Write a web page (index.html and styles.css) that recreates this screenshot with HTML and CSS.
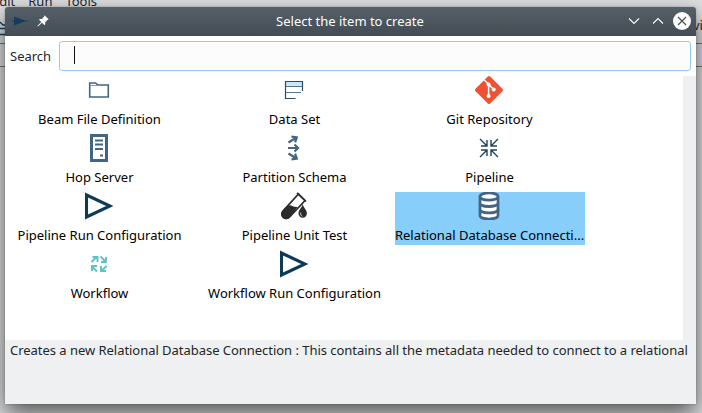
FILE: index.html
```html
<!DOCTYPE html>
<html lang="en">
<head>
<meta charset="utf-8">
<title>Select the item to create</title>
<link rel="stylesheet" href="styles.css">
</head>
<body>
<div class="backdrop">
  <div class="menubar"><span>Edit</span><span>Run</span><span>Tools</span></div>
  <div class="toolbar">
    <svg class="tool-icon" width="8" height="20" viewBox="0 0 8 20"><path d="M0 5l3 3h5M0 11.500h8M0 17.500h8" fill="none" stroke="#16405e" stroke-width="1.300"/></svg>
    <span class="tool-label">vi</span>
  </div>
  <div class="tabs"></div>
</div>
<div class="dialog">
  <header class="titlebar">
    <svg class="app-icon" width="18" height="12" viewBox="0 0 18 12"><path d="M0 6h18" stroke="#274d6b" stroke-width="1"/><path d="M3 1.500L15 6 3 10.500z" fill="#123c60"/></svg>
    <svg class="pin" width="12" height="12" viewBox="0 0 12 12"><path d="M7.500 0.300L11.700 4.300 10.600 4.800 8.200 7.300 8.200 9.500 7.300 10 4.900 7.700 1 11.600 0.300 11 4.300 7 2.100 4.800 2.600 4 4.900 3.900 7.200 1.600z" fill="#fcfcfc"/></svg>
    <h1 class="title">Select the item to create</h1>
    <div class="controls">
      <svg width="12" height="8" viewBox="0 0 12 8"><path d="M1 1.500l5 5 5-5" fill="none" stroke="#fcfcfc" stroke-width="1.100"/></svg>
      <svg width="12" height="8" viewBox="0 0 12 8"><path d="M1 6.500l5-5 5 5" fill="none" stroke="#fcfcfc" stroke-width="1.100"/></svg>
      <svg width="18" height="18" viewBox="0 0 18 18"><circle cx="9" cy="9" r="9" fill="#fcfcfc"/><path d="M5 5l8 8M13 5l-8 8" stroke="#475057" stroke-width="1.100"/></svg>
    </div>
  </header>
  <div class="search"><span class="search-label">Search</span><div class="field"><span class="caret"></span></div></div>
  <main class="list">
    <div class="grid">
      <div class="item"><svg class="icon" viewBox="0 0 28 28"><path d="M4.700 21V7h6l2 2h10.600v12z" fill="none" stroke="#416583" stroke-width="1.600"/><path d="M5 9.500h9" stroke="#8499a9" stroke-width="1"/></svg><span class="label">Beam File Definition</span></div>
      <div class="item"><svg class="icon" viewBox="0 0 28 28"><path d="M6 6h16v5H6z" fill="#c9e7fa"/><path d="M15.500 22.500h-10v-17h17V15" fill="none" stroke="#254e6c" stroke-width="1.200"/><path d="M6 10.500h16M6 16.500h15" stroke="#58758b" stroke-width="1"/></svg><span class="label">Data Set</span></div>
      <div class="item"><svg class="icon" viewBox="0 0 28 28"><path d="M12.800.6a1.700 1.700 0 0 1 2.400 0L27.400 12.800a1.700 1.700 0 0 1 0 2.400L15.200 27.400a1.700 1.700 0 0 1-2.400 0L.6 15.200a1.700 1.700 0 0 1 0-2.400z" fill="#f05133"/><path d="M9.300 3.900l4.300 4.400V20M13.700 8.500l5 5" fill="none" stroke="#fff" stroke-width="1.500"/><circle cx="13.600" cy="8.400" r="2" fill="#fff"/><circle cx="18.700" cy="13.600" r="2" fill="#fff"/><circle cx="13.600" cy="20" r="2" fill="#fff"/></svg><span class="label">Git Repository</span></div>
      <div class="item"><svg class="icon" viewBox="0 0 28 28"><path d="M6.500 1.500h15v25h-15z" fill="#fff" stroke="#416583" stroke-width="3"/><path d="M10 6.500h8M10 10.500h8M10 15h8M15 21.500h3" stroke="#416583" stroke-width="1.900"/></svg><span class="label">Hop Server</span></div>
      <div class="item"><svg class="icon" viewBox="0 0 28 28"><path d="M8.500 8.500l8-5M11.500 2.700l5.300.7-1.700 5M8 14h10M14.500 10.500L18 14l-3.500 3.500M8.500 19.500l8 5M15.100 19.600l1.700 5-5.300.7" fill="none" stroke="#416583" stroke-width="2.200"/></svg><span class="label">Partition Schema</span></div>
      <div class="item"><svg class="icon" viewBox="0 0 28 28"><path d="M5 5l6.500 6.500M6 12h6V6M23 5l-6.500 6.500M16 6v6h6M5 23l6.500-6.500M6 16h6v6M23 23l-6.500-6.500M22 16h-6v6" fill="none" stroke="#1b4562" stroke-width="1.400"/></svg><span class="label">Pipeline</span></div>
      <div class="item"><svg class="icon" viewBox="0 0 28 28"><path d="M1.500 3v22L25 14z" fill="none" stroke="#0e3a5a" stroke-width="3.100"/></svg><span class="label">Pipeline Run Configuration</span></div>
      <div class="item"><svg class="icon" viewBox="0 0 28 28"><path d="M18.500 2l6.500 6.500L9.600 25a4.300 4.300 0 0 1-6.500-6.200z" fill="#fff" stroke="#2c2c2c" stroke-width="1.700"/><path d="M17 .8l9 8.700" stroke="#2c2c2c" stroke-width="1.700"/><path d="M8 13.500c4-1 5 2 9.500 1.500L9.800 25.600a4.700 4.700 0 0 1-7.500-6.200z" fill="#2c2c2c"/><path d="M22.700 12c1 4 4.200 6 4.200 9.500a4.200 4.200 0 0 1-8.400 0c0-3.500 3.200-5.500 4.200-9.500z" fill="#2c2c2c"/><path d="M20.600 20.500c-.3 1.800.2 3 1.700 3.700" fill="none" stroke="#fff" stroke-width=".8"/></svg><span class="label">Pipeline Unit Test</span></div>
      <div class="item selected"><svg class="icon" viewBox="0 0 28 28"><path d="M5 4.500C5-.2 23-.2 23 4.500v19c0 4.700-18 4.700-18 0z" fill="#fff" stroke="#416583" stroke-width="2.700"/><path d="M5 4.800c0 4.400 18 4.400 18 0M5 11.200c0 4.400 18 4.400 18 0M5 17.600c0 4.400 18 4.400 18 0" fill="none" stroke="#416583" stroke-width="2.800"/></svg><span class="label">Relational Database Connecti...</span></div>
      <div class="item"><svg class="icon" viewBox="0 0 28 28"><path d="M6.500 12l5-5M7.500 7h5v5M15.500 6.500l5 5M16 12h5V7M12 21.500l-5-5M7 21v-5h5M21.500 16l-5 5M16 16v5h5" fill="none" stroke="#5bc2c7" stroke-width="1.900"/></svg><span class="label">Workflow</span></div>
      <div class="item"><svg class="icon" viewBox="0 0 28 28"><path d="M1.500 3v22L25 14z" fill="none" stroke="#0e3a5a" stroke-width="3.100"/></svg><span class="label">Workflow Run Configuration</span></div>
    </div>
    <div class="scrollbar"></div>
  </main>
  <footer class="description"><p>Creates a new Relational Database Connection : This contains all the metadata needed to connect to a relational database</p></footer>
</div>
</body>
</html>
```

FILE: styles.css
```css
* { box-sizing: border-box; }
body {
  margin: 0;
  width: 702px;
  height: 413px;
  overflow: hidden;
  position: relative;
  font: 13px/18px "Noto Sans", sans-serif;
  color: #232629;
}
.backdrop { height: 413px; background: #dedfe0; }
.menubar {
  height: 10px;
  display: flex;
  gap: 13px;
  margin-left: -8px;
  line-height: 2px;
}
.toolbar {
  height: 34px;
  display: flex;
  align-items: center;
  justify-content: space-between;
  border-bottom: 1px solid #73777a;
}
.tool-label { width: 9px; padding-bottom: 3px; }
.tabs { height: 23px; border-bottom: 1px solid #73777a; }
.dialog {
  position: absolute;
  left: 5px;
  top: 7px;
  width: 691px;
  height: 397px;
  display: flex;
  flex-direction: column;
  background: #eff0f1;
  border-radius: 3px 3px 0 0;
  box-shadow: 0 0 2px rgba(0,0,0,.3), 0 10px 24px rgba(0,0,0,.62);
}
.titlebar {
  height: 29px;
  display: grid;
  grid-template-columns: 18px 12px 1fr auto;
  align-items: center;
  padding: 0 5px 0 6px;
  column-gap: 9px;
  border-radius: 3px 3px 0 0;
  background: linear-gradient(#566068, #434c53);
}
.titlebar svg { display: block; margin-top: -1px; }
.titlebar .pin { margin-left: -1px; }
.title {
  margin: -2px 0 0;
  padding-left: 22px;
  font-size: 13px;
  font-weight: 400;
  text-align: center;
  color: #fcfcfc;
}
.controls { display: flex; align-items: center; gap: 12px; }
.controls svg:last-child { margin-left: -3px; }
.search {
  height: 40px;
  display: flex;
  align-items: center;
  padding: 0 5px;
  background: #fff;
}
.search-label { width: 49px; }
.field {
  flex: 1;
  height: 30px;
  padding: 4px 0 0 14px;
  border: 1px solid #93cee9;
  border-radius: 3px;
  background: #fcfcfc;
}
.caret { display: block; width: 1px; height: 18px; background: #111; }
.list { display: flex; height: 264px; background: #fff; }
.grid {
  flex: 1;
  display: grid;
  grid-template-columns: repeat(3, 190px);
  grid-auto-rows: 53px;
  gap: 5px;
  align-content: start;
}
.item {
  display: flex;
  flex-direction: column;
  align-items: center;
  color: #000;
}
.selected { background: #87cefa; }
.icon { width: 28px; height: 28px; margin-right: 2px; flex: none; }
.label { padding: 6px 1px 0 0; white-space: nowrap; }
.scrollbar { width: 13px; background: #eff0f1; }
.description { padding: 1px 5px; }
.description p {
  margin: 0;
  overflow: hidden;
  white-space: nowrap;
  letter-spacing: -0.035px;
}
```
